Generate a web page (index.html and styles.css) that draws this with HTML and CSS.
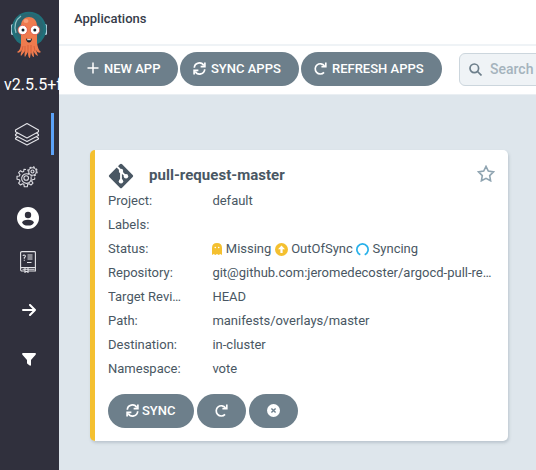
FILE: index.html
```html
<!DOCTYPE html>
<html lang="en">
<head>
<meta charset="utf-8">
<title>Applications</title>
<link rel="stylesheet" href="styles.css">
</head>
<body>
<svg class="defs" width="0" height="0">
  <symbol id="sync" viewBox="0 0 14 14"><g fill="none" stroke="currentColor" stroke-width="1.8"><path d="M1.4 6.2A5.4 5.4 0 0 1 11.600 4"/><path d="M12.600 7.800A5.400 5.400 0 0 1 2.400 10"/><path d="M12.800 .6V5H8.200M1.200 13.400V9h4.600"/></g></symbol>
  <symbol id="refresh" viewBox="0 0 14 14"><g fill="none" stroke="currentColor" stroke-width="1.8"><path d="M11.300 4.200A5.500 5.500 0 1 0 10.800 11.200"/><path d="M12.700 .5V5H8"/></g></symbol>
</svg>
<div class="app">
  <nav class="sidebar">
    <svg class="logo" viewBox="0 0 38 50">
      <rect x="1" y="14" width="36" height="11" rx="1.5" fill="#b7d3df"/>
      <circle cx="19" cy="19" r="17.3" fill="#20707a"/>
      <circle cx="19" cy="18" r="14.5" fill="#2a6671"/>
      <path d="M6 23Q2.5 12 11 6" fill="none" stroke="#8fc3c6" stroke-width="1.2"/>
      <path d="M11 16C11 4 27 4 27 16V33Q28 40 31 42Q28 44 26 40L28 46Q25 45 23.5 41L24 47Q22 47 21 42L20 48Q18 48 18 42L15 47Q14 46 15 41L11 46Q10 45 12 40Q9 44 7 42Q11 40 11 33Z" fill="#ef7b4e"/>
      <path d="M15 36v6M18 35v8M21 35v7M24 36l1 5M13 36l-1 4" stroke="#cf5635" stroke-width=".7" fill="none"/>
      <ellipse cx="16" cy="11" rx="2.5" ry="2" fill="#f6a17b"/>
      <circle cx="12.7" cy="20" r="4.7" fill="#fff" stroke="#e04e3c" stroke-width=".8"/>
      <circle cx="25" cy="20" r="4.7" fill="#fff" stroke="#e04e3c" stroke-width=".8"/>
      <circle cx="13" cy="20" r="1.5" fill="#17202b"/><circle cx="24.8" cy="20" r="1.5" fill="#17202b"/>
      <path d="M16 28.5Q19 30 22 28.5Q21.5 32.5 19 32.5T16 28.5Z" fill="#17202b"/><path d="M17.2 29.2h3.6v1h-3.6z" fill="#fff"/>
    </svg>
    <div class="version">v2.5.5+f</div>
    <a class="nav active"><svg class="layers" viewBox="0 0 26 24" fill="none" stroke="#e3e3e8" stroke-width="1.1" stroke-linejoin="round"><path d="M13 1.5 24.5 8v1.8L13 16 1.5 9.8V8Z"/><path d="M3.5 11 1.5 12.5v1L13 19.5l11.500-6v-1L22.500 11M3.500 14.800 1.500 16.200v.8L13 23l11.500-6v-.8l-2-1.400"/></svg></a>
    <a class="nav"><svg class="gear" viewBox="0 0 24 24" fill="none" stroke="#dcdce2" stroke-width="1.1" stroke-linejoin="round"><path d="M11 4.500 9 4.200 8.700 6.400 7.300 7 5.500 5.700 3.600 7.600 5 9.500 4.400 11 2 11.300v3l2.400.4.600 1.400-1.400 2 2 1.900 1.900-1.300 1.400.6.400 2.500h3l.4-2.500 1.400-.6 1.900 1.300 2-1.900-1.400-2 .6-1.400 2.500-.4v-1.700"/><path d="M13.500 9.200A4.800 4.800 0 1 0 16 12"/><circle cx="11.200" cy="13" r="2.300"/><circle cx="17.500" cy="6.500" r="3.800"/><circle cx="17.500" cy="6.500" r="4.600" stroke-width="1.300" stroke-dasharray="1.900 1.700"/><circle cx="17.500" cy="6.500" r="1.500"/></svg></a>
    <a class="nav"><svg class="user" viewBox="0 0 22 22"><circle cx="11" cy="11" r="11" fill="#fff"/><circle cx="11" cy="8" r="3.200" fill="#30303d"/><ellipse cx="11" cy="15.600" rx="5.800" ry="2.900" fill="#30303d"/></svg></a>
    <a class="nav"><svg class="book" viewBox="0 0 16 22" fill="none" stroke="#e4e4e8" stroke-width="1.100"><path d="M5 20H2Q.6 20 .6 18.500V2Q.6.600 2 .600H14.500Q15.400.600 15.400 1.500V20H8M.6 17.500Q1 16.500 2 16.500H15.400M2.500 18.300h12M5 17v4.300l1.500-1 1.500 1V17"/><path d="M3 5Q3.200 4 4.200 4T5.400 5.200Q5.400 6 4.300 6.600V7.700M4.300 8.700v1M7.500 4h5M7.500 6h5M7.500 8h5M7 11.500h4.500"/></svg></a>
    <a class="nav toggle"><svg class="arrow" viewBox="0 0 14 12" fill="none" stroke="#fff" stroke-width="2" stroke-linecap="round" stroke-linejoin="round"><path d="M1 6H13M8 1l5 5-5 5"/></svg></a>
    <a class="nav filter"><svg class="funnel" viewBox="0 0 14 13"><path d="M1 0H13Q14.500.300 13.600 1.700L9 7v5Q8.700 13.200 7.700 12.600L5.300 10.800 5 10V7L.4 1.700Q-.4.300 1 0Z" fill="#fff"/></svg></a>
  </nav>
  <main class="main">
    <header class="topbar">Applications</header>
    <div class="toolbar">
      <button class="btn new"><svg viewBox="0 0 12 12" width="12" height="12"><path d="M6 .5v11M.5 6h11" stroke="currentColor" stroke-width="1.500"/></svg><span>NEW APP</span></button>
      <button class="btn sync"><svg width="13" height="13"><use href="#sync"/></svg><span>SYNC APPS</span></button>
      <button class="btn refresh"><svg width="13" height="13"><use href="#refresh"/></svg><span>REFRESH APPS</span></button>
      <div class="search"><svg width="13" height="13" viewBox="0 0 13 13" fill="none" stroke="#6d7f8b" stroke-width="1.700"><circle cx="5.300" cy="5.300" r="4.300"/><path d="m8.500 8.500 4 4"/></svg><span>Search</span></div>
    </div>
    <section class="content">
      <article class="card">
        <div class="title">
          <svg class="git" width="26" height="26" viewBox="0 0 26 26"><path d="M11.900 1.300Q13 .200 14.100 1.300L24.700 11.900Q25.800 13 24.700 14.100L14.100 24.700Q13 25.800 11.900 24.700L1.300 14.100Q.200 13 1.300 11.900Z" fill="#495763"/><path d="M9 3.500 13 7.500v11M13 8.500l5 5" stroke="#fff" stroke-width="1.800" fill="none"/><circle cx="13" cy="8" r="2.200" fill="#fff"/><circle cx="13" cy="18.300" r="2.200" fill="#fff"/><circle cx="18" cy="13.300" r="2.200" fill="#fff"/></svg>
          <h1>pull-request-master</h1>
          <svg class="star" width="18" height="17" viewBox="0 0 18 17"><path d="m9 1.400 2.300 4.700 5.200.8-3.800 3.700.9 5.200L9 13.300l-4.600 2.500.9-5.200L1.500 6.900l5.200-.8Z" fill="none" stroke="#8fa4b1" stroke-width="1.600"/></svg>
        </div>
        <dl>
          <dt>Project:</dt><dd>default</dd>
          <dt>Labels:</dt><dd></dd>
          <dt>Status:</dt>
          <dd class="status">
            <svg class="ghost" width="10" height="12" viewBox="0 0 10 12"><path d="M0 5Q0 0 5 0T10 5V12L8.300 11 6.700 12 5 11 3.300 12 1.700 11 0 12Z" fill="#f4c030"/><circle cx="3.300" cy="4.500" r=".8" fill="#fff"/><circle cx="6.700" cy="4.500" r=".8" fill="#fff"/></svg><span>Missing</span>
            <svg width="13" height="13" viewBox="0 0 13 13"><circle cx="6.500" cy="6.500" r="6.500" fill="#f4c030"/><path d="M6.500 2.500 10 6.200H7.600V10H5.400V6.200H3Z" fill="#fff"/></svg><span>OutOfSync</span>
            <svg width="13" height="13" viewBox="0 0 13 13"><path d="M4.300 11.700A5.600 5.600 0 1 1 8.700 11.700" fill="none" stroke="#28b1ea" stroke-width="1.700"/></svg><span>Syncing</span>
          </dd>
          <dt>Repository:</dt><dd>git@github.com:jeromedecoster/argocd-pull-request</dd>
          <dt>Target Revision:</dt><dd>HEAD</dd>
          <dt>Path:</dt><dd>manifests/overlays/master</dd>
          <dt>Destination:</dt><dd>in-cluster</dd>
          <dt>Namespace:</dt><dd>vote</dd>
        </dl>
        <div class="actions">
          <button class="btn small-sync"><svg width="13" height="13"><use href="#sync"/></svg><span>SYNC</span></button>
          <button class="btn icon"><svg width="13" height="13"><use href="#refresh"/></svg></button>
          <button class="btn icon"><svg width="13" height="13" viewBox="0 0 13 13"><circle cx="6.500" cy="6.500" r="6.500" fill="#fff"/><path d="m4.400 4.400 4.200 4.200m0-4.200L4.400 8.600" stroke="#6d7f8b" stroke-width="1.400"/></svg></button>
        </div>
      </article>
    </section>
  </main>
</div>
</body>
</html>
```
FILE: styles.css
```css
* { box-sizing: border-box; }
body { margin: 0; overflow: hidden; font-family: Roboto, sans-serif; font-size: 13px; color: #495763; }
svg { display: block; flex: none; }
.defs { position: absolute; }
.app { display: flex; width: 536px; height: 470px; overflow: hidden; }
.sidebar { display: flex; flex-direction: column; flex: none; width: 59px; background: #30303d; overflow: hidden; }
.logo { width: 38px; height: 50px; margin: 10px 0 0 10px; }
.version { height: 20px; margin: 15px 0 18px 4px; font-size: 16px; line-height: 20px; color: #fff; white-space: nowrap; }
.nav { display: flex; align-items: center; height: 42px; border-right: 3px solid transparent; margin-right: 5px; }
.active { border-color: #5ba2f8; }
.layers { width: 26px; height: 24px; margin-left: 14px; }
.gear { width: 24px; height: 24px; margin: 1px 0 0 15px; }
.user { width: 22px; height: 22px; margin: 0 0 0 17px; }
.book { width: 16px; height: 22px; margin: 3px 0 0 20px; }
.arrow { width: 14px; height: 12px; margin-left: 22px; }
.funnel { width: 14px; height: 13px; margin-left: 22px; }
.toggle { margin-top: 8px; }
.filter { margin-top: 7px; }
.main { flex: none; width: 477px; display: flex; flex-direction: column; background: #dee6ec; }
.topbar { height: 46px; padding-left: 15px; line-height: 37px; background: #fff; border-bottom: 2px solid #eff3f6; color: #363c4a; font-weight: 500; }
.toolbar { display: flex; align-items: flex-start; height: 49px; padding: 6px 0 0 15px; background: #fff; border-bottom: 1px solid #eaeff3; }
.btn { display: flex; align-items: center; flex: none; height: 34px; padding: 0 0 2px; margin: 0 2px 0 0; border: 0; border-radius: 17px; background: #6d7f8b; color: #fff; font: 500 13px Roboto, sans-serif; white-space: nowrap; }
.new { width: 104px; padding-left: 13px; gap: 5px; }
.sync { width: 119px; padding-left: 13px; gap: 5px; }
.refresh { width: 141px; padding-left: 13px; gap: 5px; }
.search { display: flex; align-items: center; gap: 8px; width: 200px; height: 33px; margin: 1px 0 0 15px; padding: 0 0 1px 9px; flex: none; border: 1px solid #ccd6dd; border-radius: 6px; background: #eff3f6; color: #a5b3bd; font-size: 14px; font-weight: 500; }
.content { padding: 55px 0 0 31px; }
.card { width: 418px; height: 291px; padding: 11px 13px 0 13px; background: #fff; border-left: 5px solid #f4c030; border-radius: 5px; box-shadow: 1px 2px 3px rgba(109,127,139,.3); }
.title { display: flex; align-items: center; height: 28px; }
.git { margin-top: 2px; }
h1 { flex: 1; margin: 0 0 0 15px; font-size: 15px; font-weight: 700; line-height: 28px; letter-spacing: .03px; }
.star { margin-top: -3px; }
dl { display: grid; grid-template-columns: 74px 282px; column-gap: 30.4px; grid-auto-rows: 24px; margin: 0; line-height: 24px; }
dt, dd { margin: 0; overflow: hidden; white-space: nowrap; text-overflow: ellipsis; }
.status { display: flex; align-items: center; gap: 3.4px; }
.actions { display: flex; margin-top: 13px; }
.small-sync { width: 86px; margin-right: 3px; padding-left: 18px; gap: 3px; }
.icon { width: 49px; margin-right: 3px; justify-content: center; }
```
